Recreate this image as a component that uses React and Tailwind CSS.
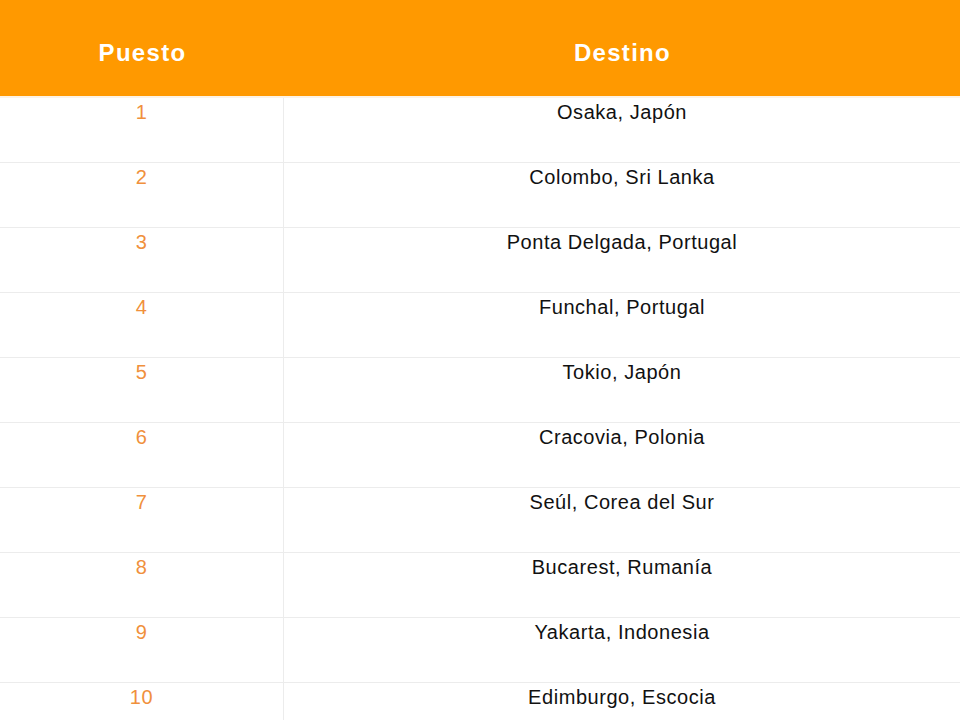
import React from "react";

const rows = [
  "Osaka, Japón",
  "Colombo, Sri Lanka",
  "Ponta Delgada, Portugal",
  "Funchal, Portugal",
  "Tokio, Japón",
  "Cracovia, Polonia",
  "Seúl, Corea del Sur",
  "Bucarest, Rumanía",
  "Yakarta, Indonesia",
  "Edimburgo, Escocia",
];

export default function App() {
  return (
    <div className="w-[960px] h-[720px] overflow-hidden bg-white" style={{ fontFamily: '"Liberation Sans", Arial, sans-serif' }}>
      <div className="grid grid-cols-[284px_1fr] h-[96px] bg-[#ff9900] border-b-2 border-[#fdf3e6] box-content">
        <div className="flex items-center justify-center pt-[9px] pl-[1px] text-white font-bold text-[24px] tracking-[1.3px]">
          Puesto
        </div>
        <div className="flex items-center justify-center pt-[9px] pl-[1px] text-white font-bold text-[24px] tracking-[1.3px]">
          Destino
        </div>
      </div>
      {rows.map((d, i) => (
        <div key={i} className="grid grid-cols-[284px_1fr] h-[65px] border-b border-[#ececec]">
          <div className="border-r border-[#ececec] text-center pt-[3px] text-[20px] leading-[22px] text-[#f0903c] tracking-[0.55px]">
            {i + 1}
          </div>
          <div className="text-center pt-[3px] text-[20px] leading-[22px] text-[#111] tracking-[0.55px]">
            {d}
          </div>
        </div>
      ))}
    </div>
  );
}
